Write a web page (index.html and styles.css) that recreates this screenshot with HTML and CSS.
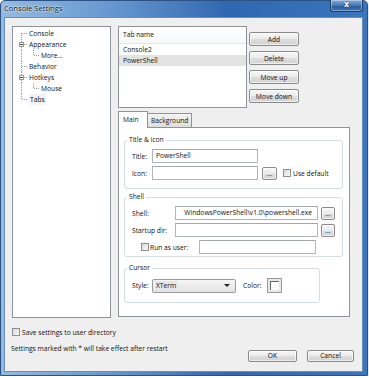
FILE: index.html
```html
<!DOCTYPE html>
<html lang="en">
<head>
    <meta charset="UTF-8">
    <title>Console Settings</title>
    <link rel="stylesheet" href="styles.css">
</head>
<body>
    <div class="window">
        <div class="titlebar">
            <span class="title">Console Settings</span>
            <span class="close">x</span>
        </div>

        <div class="client">
            <div class="main">
                <!-- settings tree -->
                <div class="tree">
                    <div class="node"><span class="g g-first"></span><span>Console</span></div>
                    <div class="node"><span class="g g-tee"><span class="exp"></span></span><span>Appearance</span></div>
                    <div class="node"><span class="g g-pipe"></span><span class="g g-last"></span><span>More...</span></div>
                    <div class="node"><span class="g g-tee"></span><span>Behavior</span></div>
                    <div class="node"><span class="g g-tee"><span class="exp"></span></span><span>Hotkeys</span></div>
                    <div class="node"><span class="g g-pipe"></span><span class="g g-last"></span><span>Mouse</span></div>
                    <div class="node"><span class="g g-last"></span><span class="current">Tabs</span></div>
                </div>

                <div class="right">
                    <div class="tab-list-row">
                        <div class="listview">
                            <div class="lv-head">Tab name</div>
                            <div class="lv-row">Console2</div>
                            <div class="lv-row sel">PowerShell</div>
                        </div>
                        <div class="side-buttons">
                            <button class="btn">Add</button>
                            <button class="btn">Delete</button>
                            <button class="btn">Move up</button>
                            <button class="btn">Move down</button>
                        </div>
                    </div>

                    <div class="tabstrip">
                        <span class="tab active">Main</span>
                        <span class="tab">Background</span>
                    </div>
                    <div class="tabpanel">
                        <fieldset class="group group-title">
                            <legend>Title &amp; icon</legend>
                            <div class="row">
                                <span class="lbl">Title:</span>
                                <span class="field title-field">PowerShell</span>
                            </div>
                            <div class="row">
                                <span class="lbl">Icon:</span>
                                <span class="field title-field"></span>
                                <button class="btn dots">...</button>
                                <span class="check use-default"></span>
                                <span class="check-text">Use default</span>
                            </div>
                        </fieldset>

                        <fieldset class="group group-shell">
                            <legend>Shell</legend>
                            <div class="row">
                                <span class="lbl wide">Shell:</span>
                                <span class="field shell-field path">WindowsPowerShell\v1.0\powershell.exe</span>
                                <button class="btn dots">...</button>
                            </div>
                            <div class="row">
                                <span class="lbl wide">Startup dir:</span>
                                <span class="field shell-field"></span>
                                <button class="btn dots">...</button>
                            </div>
                            <div class="row">
                                <span class="runas"><span class="check"></span><span class="check-text">Run as user:</span></span>
                                <span class="field user-field"></span>
                            </div>
                        </fieldset>

                        <fieldset class="group group-cursor">
                            <legend>Cursor</legend>
                            <div class="row tall">
                                <span class="lbl">Style:</span>
                                <span class="combo"><span class="combo-text">XTerm</span><span class="arrow"></span></span>
                                <span class="lbl color-lbl">Color:</span>
                                <span class="swatch"><span></span></span>
                            </div>
                        </fieldset>
                    </div>
                </div>
            </div>

            <div class="footer">
                <div class="footer-left">
                    <div class="save-row"><span class="check"></span><span class="check-text">Save settings to user directory</span></div>
                    <div class="note">Settings marked with * will take effect after restart</div>
                </div>
                <div class="footer-buttons">
                    <button class="btn ok">OK</button>
                    <button class="btn cancel">Cancel</button>
                </div>
            </div>
        </div>
    </div>
</body>
</html>
```

FILE: styles.css
```css
:root {
    --v: repeating-linear-gradient(180deg, #9c9c9c 0 1px, transparent 1px 2px);
    --h: repeating-linear-gradient(90deg, #9c9c9c 0 1px, transparent 1px 2px);
}
* {
    box-sizing: border-box;
}
body {
    margin: 0;
    background-color: #fff;
    font-family: "Open Sans", "Liberation Sans", sans-serif;
    font-size: 6.7px;
    color: #111;
}
.window {
    width: 368px;
    height: 376px;
    padding: 0 4px 3px 3px;
    display: flex;
    flex-direction: column;
    background: linear-gradient(90deg, #93bbe2 0%, #6797cf 30%, #2f68b0 62%, #3a76bc 100%);
    border: 1px solid #2b5282;
    border-radius: 5px 5px 0 0;
    box-shadow: 0 1px 2px rgba(0,0,0,0.35);
}
.titlebar {
    height: 16px;
    display: flex;
    justify-content: space-between;
    align-items: flex-start;
}
.title {
    padding-top: 1px;
    line-height: 13px;
    font-size: 7.6px;
    color: #111;
    text-shadow: 0 0 3px #fff, 0 0 2px #fff;
}
.close {
    width: 33px;
    height: 12px;
    margin-top: -1px;
    border: 1px solid #1f3f69;
    border-top: none;
    border-radius: 0 0 3px 3px;
    background: linear-gradient(#86acd8, #4678b7 50%, #2c5d9d 51%, #3d71b2);
    box-shadow: inset 0 0 0 1px rgba(255,255,255,0.35);
    color: #fff;
    font: bold 8px "DejaVu Sans", sans-serif;
    line-height: 10px;
    text-align: center;
    text-shadow: 0 0 2px #1b3556;
}
.client {
    flex: 1;
    padding: 8px 8px 9px 7px;
    background-color: #efefef;
    border: 1px solid #6b8db6;
}
.main {
    display: flex;
    gap: 7px;
    height: 292px;
}

/* tree */
.tree {
    width: 99px;
    height: 292px;
    padding: 1px 0 0 4px;
    background-color: #fff;
    border: 1px solid #8e9399;
}
.node {
    display: flex;
    height: 11px;
    line-height: 11px;
    white-space: nowrap;
}
.g {
    width: 12px;
    height: 11px;
    flex: none;
    display: flex;
    align-items: center;
}
.g-first {
    background: var(--v) 4px 5px / 1px 6px no-repeat, var(--h) 5px 5px / 6px 1px no-repeat;
}
.g-tee {
    background: var(--v) 4px 0 / 1px 11px no-repeat, var(--h) 5px 5px / 6px 1px no-repeat;
}
.g-last {
    background: var(--v) 4px 0 / 1px 6px no-repeat, var(--h) 5px 5px / 6px 1px no-repeat;
}
.g-pipe {
    background: var(--v) 4px 0 / 1px 11px no-repeat;
}
.exp {
    width: 5px;
    height: 5px;
    margin-left: 2px;
    border: 1px solid #9a9a9a;
    background: #fff linear-gradient(#555, #555) center / 3px 1px no-repeat;
}
.current {
    padding: 0 1px;
    background-color: #f3f3f3;
}

/* right side */
.right {
    width: 232px;
}
.tab-list-row {
    display: flex;
    height: 82px;
}
.listview {
    width: 129px;
    height: 82px;
    background-color: #fff;
    border: 1px solid #8e9399;
}
.lv-head {
    height: 17px;
    line-height: 16px;
    padding-left: 4px;
    border-bottom: 1px solid #e3e5e8;
    background: linear-gradient(#fff, #f6f7f9);
}
.lv-row {
    height: 11px;
    line-height: 11px;
    padding-left: 4px;
}
.lv-row.sel {
    background-color: #e3e3e3;
}
.btn {
    padding: 0;
    font: inherit;
    color: #111;
    text-align: center;
    border: 1px solid #8b8b8b;
    border-radius: 2px;
    background: linear-gradient(#f7f7f7 0%, #ebebeb 50%, #dddddd 51%, #d3d3d3 100%);
    box-shadow: inset 0 0 0 1px rgba(255,255,255,0.6);
}
.side-buttons {
    display: flex;
    flex-direction: column;
    gap: 5px;
    margin-left: 2px;
    padding-top: 6px;
}
.side-buttons .btn {
    width: 50px;
    height: 14px;
}

/* tabs */
.tabstrip {
    display: flex;
    align-items: flex-end;
    height: 16px;
    margin-top: 3px;
}
.tab {
    border: 1px solid #8f939b;
    border-bottom: none;
}
.tab.active {
    position: relative;
    z-index: 1;
    width: 30px;
    height: 17px;
    margin-bottom: -1px;
    padding-left: 4px;
    line-height: 16px;
    background-color: #fff;
}
.tab:not(.active) {
    width: 44px;
    height: 14px;
    padding-left: 3px;
    line-height: 13px;
    border-left: none;
    background: linear-gradient(#f4f4f4, #dedede);
}
.tabpanel {
    height: 190px;
    padding: 8px 6px 0 5px;
    background-color: #fff;
    border: 1px solid #8f939b;
}
.group {
    margin: 0;
    min-width: 0;
    border: 1px solid #d5dce2;
    border-radius: 3px;
}
.group legend {
    padding: 0 2px;
    margin-left: -5px;
    line-height: 8px;
}
.group-title {
    width: 219px;
    padding: 5px 6px 8px 7px;
}
.group-shell {
    width: 219px;
    margin-top: 4px;
    padding: 5px 6px 2px 7px;
}
.group-cursor {
    width: 196px;
    margin-top: 7px;
    padding: 6px 6px 9px 7px;
}
.row {
    display: flex;
    align-items: center;
    height: 14px;
}
.row + .row {
    margin-top: 3px;
}
.row.tall {
    height: 15px;
}
.lbl {
    width: 20px;
    flex: none;
}
.lbl.wide {
    width: 43px;
}
.field {
    display: block;
    height: 14px;
    padding: 0 3px;
    line-height: 12px;
    white-space: nowrap;
    overflow: hidden;
    background-color: #fff;
    border: 1px solid #b0b5bc;
    border-top-color: #a3a8af;
}
.title-field {
    width: 106px;
}
.shell-field {
    width: 143px;
}
.user-field {
    width: 117px;
}
.path {
    text-align: right;
    padding-right: 5px;
}
.dots {
    width: 15px;
    height: 13px;
    margin-left: 4px;
    line-height: 9px;
}
.group-shell .dots {
    width: 14px;
    margin-left: 3px;
}
.check {
    width: 8px;
    height: 8px;
    flex: none;
    border: 1px solid #8f8f8f;
    background: linear-gradient(135deg, #d6d6d6, #fbfbfb);
}
.check-text {
    margin-left: 2px;
    white-space: nowrap;
}
.use-default {
    margin-left: 6px;
}
.runas {
    display: flex;
    align-items: center;
    width: 58px;
    margin-left: 9px;
}
.runas .check-text {
    margin-left: 1px;
}
.combo {
    display: flex;
    align-items: center;
    justify-content: space-between;
    width: 84px;
    height: 14px;
    padding: 0 5px 0 2px;
    border: 1px solid #9a9a9a;
    border-radius: 2px;
    background: linear-gradient(#f6f6f6, #e3e3e3);
}
.combo-text {
    padding: 0 1px;
    line-height: 10px;
    background-color: #e2e5ea;
}
.arrow {
    width: 0;
    height: 0;
    border-left: 3px solid transparent;
    border-right: 3px solid transparent;
    border-top: 3px solid #222;
}
.color-lbl {
    width: 24px;
    margin-left: 7px;
}
.swatch {
    width: 15px;
    height: 15px;
    padding: 2px;
    border: 1px solid #9a9a9a;
    background-color: #e9e9e9;
}
.swatch span {
    display: block;
    width: 100%;
    height: 100%;
    background-color: #fff;
    border-top: 1px solid #666;
    border-left: 1px solid #666;
}

/* footer */
.footer {
    display: flex;
    justify-content: space-between;
    align-items: flex-end;
    height: 44px;
}
.footer-left {
    align-self: flex-start;
    padding-top: 10px;
}
.save-row {
    display: flex;
    align-items: center;
    height: 8px;
}
.note {
    margin-top: 7px;
    margin-left: -1px;
    line-height: 11px;
}
.footer-buttons {
    display: flex;
    gap: 10px;
}
.footer-buttons .btn {
    height: 12px;
    line-height: 10px;
}
.ok {
    width: 49px;
}
.cancel {
    width: 47px;
}
```
